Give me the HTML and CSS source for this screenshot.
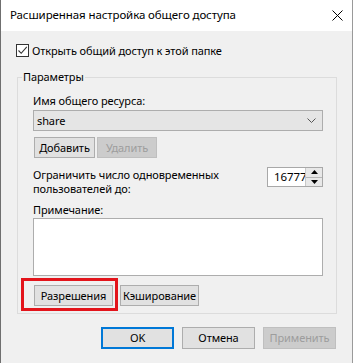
FILE: index.html
```html
<!DOCTYPE html>
<html lang="ru">
<head>
<meta charset="utf-8">
<link rel="stylesheet" href="styles.css">
</head>
<body>
<div class="window">
  <div class="titlebar">
    <span class="title">Расширенная настройка общего доступа</span>
    <svg class="close" width="11" height="11" viewBox="0 0 11 11"><path d="M0.5 0.5 L10.5 10.5 M10.5 0.5 L0.5 10.5" stroke="#000" stroke-width="1" fill="none"/></svg>
  </div>
  <div class="content">
    <label class="check-row">
      <span class="checkbox"><svg width="11" height="11" viewBox="0 0 11 11"><path d="M1.5 5.5 L4.2 8.3 L9.8 1.8" stroke="#333" stroke-width="1.1" fill="none"/></svg></span>
      <span>Открыть общий доступ к этой папке</span>
    </label>
    <fieldset class="group">
      <legend>Параметры</legend>
      <div class="group-body">
        <div class="label">Имя общего ресурса:</div>
        <div class="combo">
          <span>share</span>
          <svg class="chev" width="9" height="5" viewBox="0 0 9 5"><path d="M0.5 0.5 L4.5 4.5 L8.5 0.5" stroke="#555" stroke-width="1" fill="none"/></svg>
        </div>
        <div class="btn-row small">
          <button class="btn add">Добавить</button>
          <button class="btn disabled del">Удалить</button>
        </div>
        <div class="limit-row">
          <div class="limit-text"><div>Ограничить число одновременных</div><div>пользователей до:</div></div>
          <div class="spin">
            <span class="spin-val">16777</span>
            <span class="spin-btns">
              <span class="spin-up"><svg width="7" height="4" viewBox="0 0 7 4"><path d="M0 4 L3.5 0 L7 4 Z" fill="#000"/></svg></span>
              <span class="spin-down"><svg width="7" height="4" viewBox="0 0 7 4"><path d="M0 0 L3.5 4 L7 0 Z" fill="#000"/></svg></span>
            </span>
          </div>
        </div>
        <div class="label note-label">Примечание:</div>
        <div class="textarea"></div>
        <div class="btn-row perm-row">
          <span class="highlight"><button class="btn perm">Разрешения</button></span>
          <button class="btn cache">Кэширование</button>
        </div>
      </div>
    </fieldset>
    <div class="footer">
      <button class="btn ok">OK</button>
      <button class="btn cancel">Отмена</button>
      <button class="btn disabled apply">Применить</button>
    </div>
  </div>
</div>
</body>
</html>
```
FILE: styles.css
```css
* { box-sizing: border-box; }
html, body { margin: 0; padding: 0; }
body {
  font-family: "Noto Sans", "Liberation Sans", sans-serif;
  font-size: 11px;
  letter-spacing: -0.1px;
  color: #000;
  background: #f0f0f0;
}
.window {
  width: 353px;
  height: 363px;
  background: #f0f0f0;
  border-left: 1px solid #6f6f6f;
  border-right: 1px solid #9a9a9a;
  display: flex;
  flex-direction: column;
}
.titlebar {
  height: 31px;
  background: #fff;
  display: flex;
  align-items: center;
  padding-left: 9px;
  padding-right: 9px;
}
.title {
  flex: 1;
  font-size: 11.5px;
  line-height: 16px;
  margin-top: -1px;
}
.close { display: block; margin-top: -1px; }
.content {
  padding: 13px 0 0 15px;
}
.check-row {
  display: flex;
  align-items: center;
  height: 13px;
  gap: 3px;
}
.checkbox {
  width: 13px;
  height: 13px;
  border: 1px solid #333;
  background: #fff;
  display: flex;
  align-items: center;
  justify-content: center;
}
.checkbox svg { display: block; }
.group {
  margin: 12px 0 0 1px;
  width: 320px;
  height: 245px;
  border: 1px solid #dcdcdc;
  padding: 0;
  min-width: 0;
}
.group legend {
  margin-left: 4px;
  padding: 0 1px;
  line-height: 16px;
}
.group-body {
  padding: 8px 13px 0 15px;
}
.label { line-height: 16px; height: 16px; }
.combo {
  margin-top: 1px;
  height: 21px;
  border: 1px solid #adadad;
  background: #e5e5e5;
  display: flex;
  align-items: center;
  padding-left: 3px;
  padding-right: 6px;
}
.combo span { flex: 1; }
.chev { display: block; }
.btn {
  font: inherit;
  letter-spacing: inherit;
  color: #000;
  background: #e1e1e1;
  border: 1px solid #adadad;
  height: 21px;
  padding: 0;
  margin: 0;
  line-height: 19px;
  display: block;
}
.btn.disabled {
  background: #cccccc;
  border-color: #bfbfbf;
  color: #9d9d9d;
}
.btn-row { display: flex; gap: 2px; }
.small { margin-top: 6px; padding-left: 1px; }
.add { width: 61px; }
.del { width: 60px; }
.limit-row {
  margin-top: 8px;
  display: flex;
  justify-content: space-between;
  align-items: flex-start;
}
.limit-text { line-height: 14px; margin-top: 2px; }
.spin {
  margin-top: 1px;
  width: 56px;
  height: 20px;
  border: 1px solid #a8a8a8;
  background: #fff;
  display: flex;
  overflow: hidden;
}
.spin-val {
  flex: 1;
  overflow: hidden;
  white-space: nowrap;
  padding-left: 6px;
  line-height: 18px;
  font-size: 11.5px;
}
.spin-btns {
  width: 17px;
  display: flex;
  flex-direction: column;
  border-left: 1px solid #c8c8c8;
}
.spin-up, .spin-down {
  flex: 1;
  background: #e8e8e8;
  display: flex;
  align-items: center;
  justify-content: center;
}
.spin-up { border-bottom: 1px solid #b8b8b8; }
.spin-up svg, .spin-down svg { display: block; }
.note-label { margin-top: 6px; }
.textarea {
  margin-top: 0;
  height: 58px;
  border: 1px solid #adadad;
  background: #fff;
}
.perm-row { margin-top: 9px; padding-left: 1px; gap: 7px; }
.highlight { position: relative; display: block; }
.highlight::after {
  content: "";
  position: absolute;
  left: -13px;
  top: -7px;
  right: -5px;
  bottom: -5px;
  border: 3px solid #e3141b;
  pointer-events: none;
}
.perm { width: 79px; }
.cache { width: 79px; }
.footer {
  margin-top: 13px;
  display: flex;
  gap: 8px;
  padding-left: 85px;
}
.footer .btn { width: 73px; height: 22px; line-height: 20px; }
.ok { border: 2px solid #0078d7 !important; line-height: 18px !important; }
```
